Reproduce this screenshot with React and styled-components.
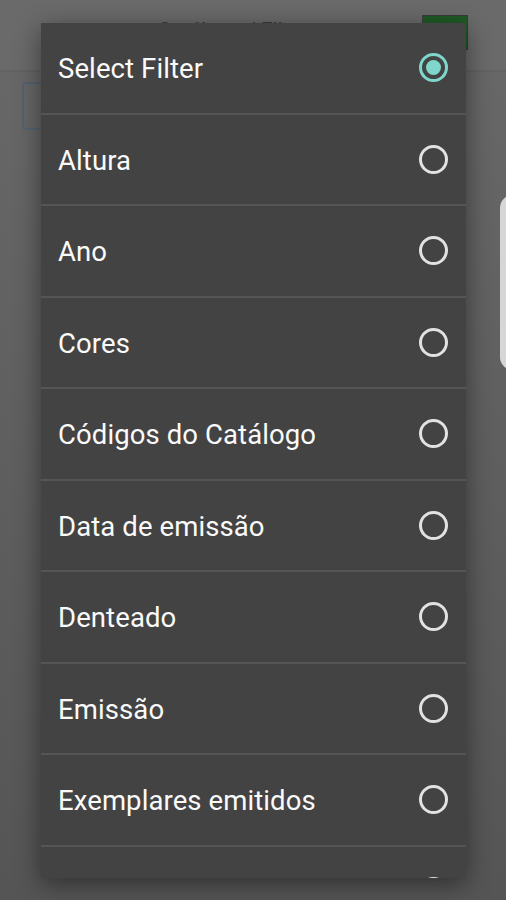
import React, { useState } from "react";
import styled, { createGlobalStyle } from "styled-components";

const filters = [
  "Select Filter",
  "Altura",
  "Ano",
  "Cores",
  "Códigos do Catálogo",
  "Data de emissão",
  "Denteado",
  "Emissão",
  "Exemplares emitidos",
];

const Global = createGlobalStyle`
  html, body { margin: 0; padding: 0; }
  body {
    width: 506px;
    height: 900px;
    overflow: hidden;
    font-family: Roboto, "Noto Sans", sans-serif;
    background: #666;
  }
`;

const Screen = styled.div`
  position: relative;
  width: 506px;
  height: 900px;
  overflow: hidden;
  background: linear-gradient(#6a6a6a, #6a6a6a 70px, #676767 72px, #555 900px);
`;

const Header = styled.header`
  height: 70px;
  border-bottom: 2px solid #626262;
  display: flex;
  justify-content: center;
  position: relative;
  color: #383838;
  font-size: 21px;
`;

const Title = styled.span`
  margin-top: 18px;
  margin-left: -40px;
`;

const Flag = styled.div`
  position: absolute;
  left: 422px;
  top: 15px;
  width: 44px;
  height: 33px;
  background: #1f5a25;
  border: 1px solid #3b3b3b;
`;

const Toolbar = styled.div`
  display: flex;
  justify-content: space-between;
  align-items: center;
  padding: 10px 34px 0 22px;
`;

const SearchBox = styled.div`
  width: 60px;
  height: 44px;
  border: 2px solid #55626e;
  border-radius: 4px;
`;

const MoreDots = styled.span`
  color: #1e1e1e;
  font-size: 20px;
  line-height: 1;
`;

const SidePill = styled.div`
  position: absolute;
  right: -20px;
  top: 195px;
  width: 26px;
  height: 175px;
  border-radius: 13px;
  background: #d6d6d6;
`;

const Scrim = styled.div`
  position: absolute;
  inset: 0;
  padding: 23px 0 0 41px;
`;

const Dialog = styled.div`
  width: 425px;
  height: 855px;
  background: #434343;
  overflow: hidden;
  box-shadow: 0 6px 24px rgba(0, 0, 0, 0.45);
`;

const Row = styled.label`
  box-sizing: border-box;
  height: 91.5px;
  display: flex;
  align-items: center;
  justify-content: space-between;
  padding: 2px 18px 0 17px;
  border-bottom: 2px solid #555;
  color: #fafafa;
  font-size: 27.5px;
  letter-spacing: 0.1px;
  cursor: pointer;
`;

const Radio = styled.span`
  box-sizing: border-box;
  width: 29px;
  height: 29px;
  border-radius: 50%;
  border: 3px solid ${(p) => (p.$on ? "#7fd6cb" : "#e2e2e2")};
  display: flex;
  align-items: center;
  justify-content: center;
  margin-left: auto;
  margin-top: -2px;
  &::after {
    content: "";
    width: 15px;
    height: 15px;
    border-radius: 50%;
    background: ${(p) => (p.$on ? "#7fd6cb" : "transparent")};
  }
`;

export default function App() {
  const [selected, setSelected] = useState(0);
  return (
    <Screen>
      <Global />
      <Header>
        <Title>Catálogo / Filtro</Title>
        <Flag />
      </Header>
      <Toolbar>
        <SearchBox />
        <MoreDots>⋮</MoreDots>
      </Toolbar>
      <SidePill />
      <Scrim>
        <Dialog>
          {filters.map((f, i) => (
            <Row key={f} onClick={() => setSelected(i)}>
              <span>{f}</span>
              <Radio $on={selected === i} />
            </Row>
          ))}
          <Row onClick={() => setSelected(filters.length)}>
            <Radio $on={selected === filters.length} />
          </Row>
        </Dialog>
      </Scrim>
    </Screen>
  );
}
